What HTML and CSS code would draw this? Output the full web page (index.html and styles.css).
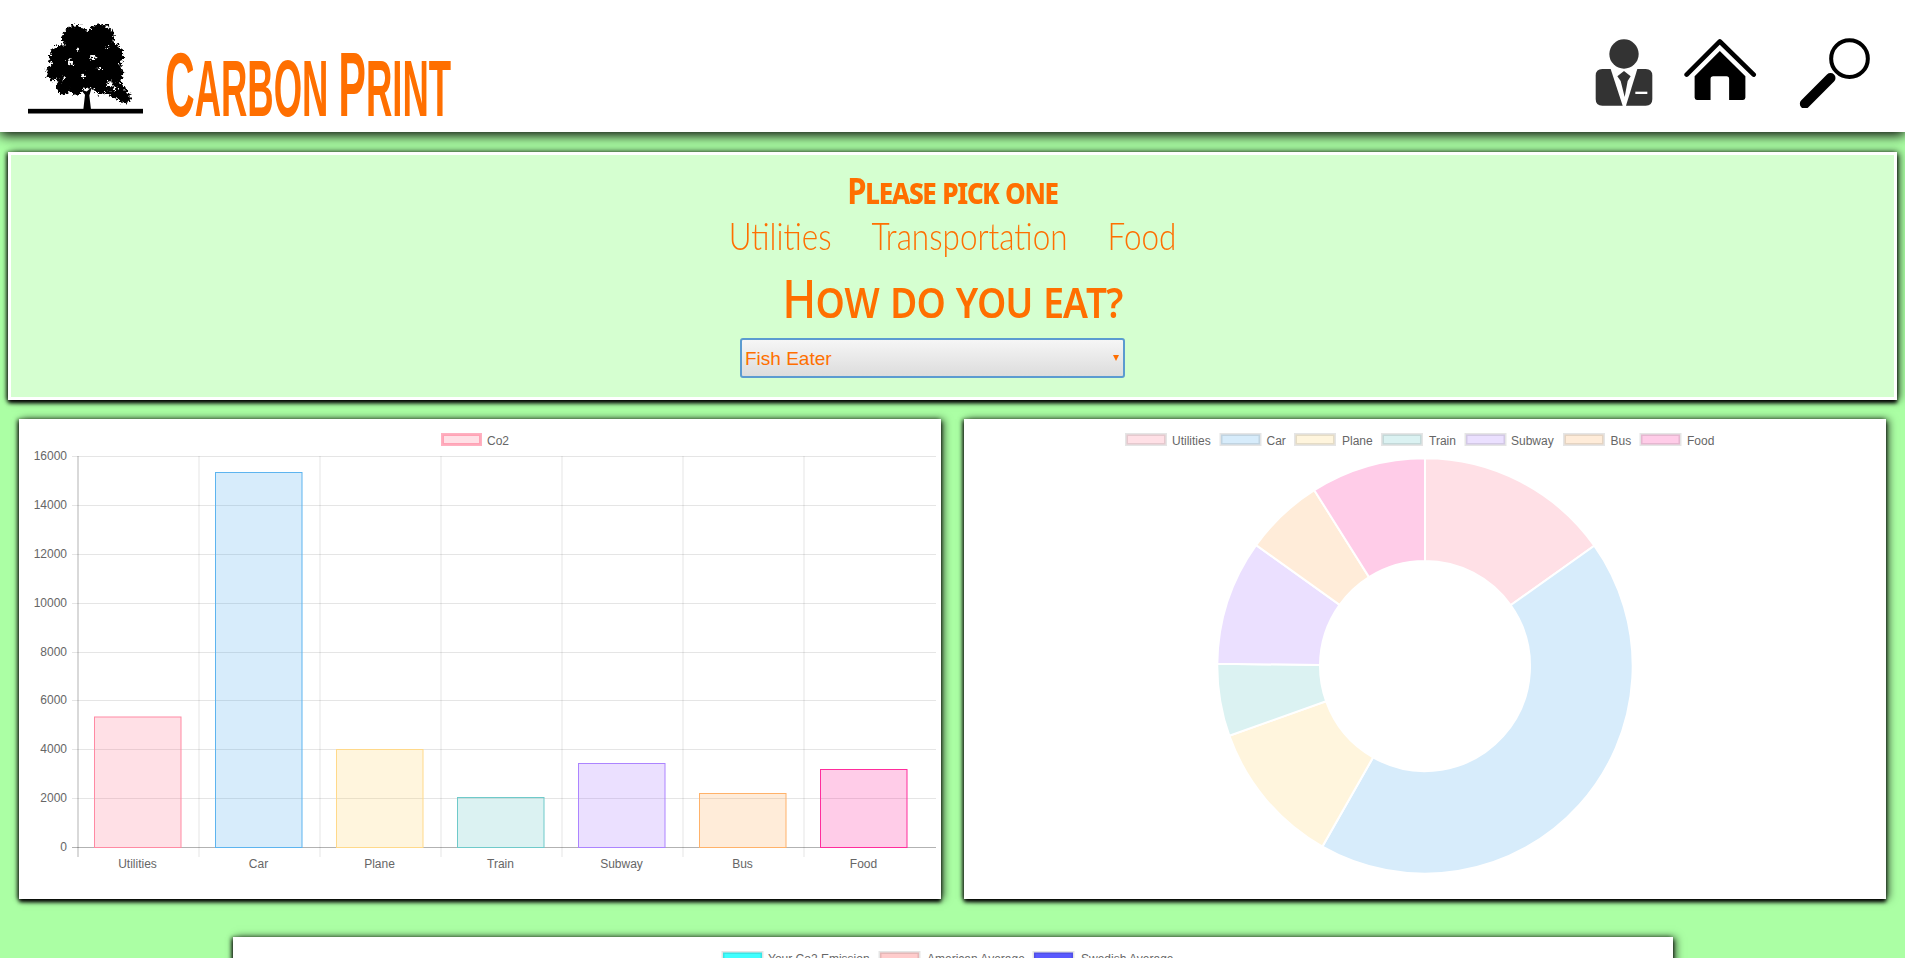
FILE: index.html
```html
<!DOCTYPE html>
<html lang="en">
<head>
  <meta charset="UTF-8" />
  <title>Carbon Print</title>
  <link rel="stylesheet" href="styles.css">
</head>
<body>
  <header class="topbar">
    <div class="brand">
      <svg class="tree" viewBox="24 20 345 275">
        <defs>
          <filter id="rough" x="-10%" y="-10%" width="120%" height="120%">
            <feTurbulence type="fractalNoise" baseFrequency="0.13" numOctaves="3" seed="4" />
            <feDisplacementMap in="SourceGraphic" scale="26" xChannelSelector="R" yChannelSelector="G" />
          </filter>
        </defs>
        <g filter="url(#rough)">
          <circle cx="165" cy="68" r="38" /><circle cx="240" cy="68" r="42" />
          <circle cx="125" cy="125" r="36" /><circle cx="200" cy="110" r="60" />
          <circle cx="272" cy="120" r="38" /><circle cx="105" cy="172" r="26" />
          <circle cx="150" cy="170" r="45" /><circle cx="210" cy="170" r="50" />
          <circle cx="275" cy="175" r="35" /><circle cx="130" cy="215" r="22" />
          <circle cx="290" cy="225" r="27" /><circle cx="314" cy="245" r="18" />
          <circle cx="245" cy="205" r="30" /><circle cx="170" cy="218" r="20" />
          <g class="tree-holes">
            <circle cx="150" cy="140" r="9" /><circle cx="190" cy="180" r="6" />
            <circle cx="220" cy="125" r="7" /><circle cx="270" cy="205" r="8" />
            <circle cx="285" cy="218" r="6" /><circle cx="105" cy="195" r="5" />
            <circle cx="130" cy="190" r="5" /><circle cx="240" cy="160" r="4" />
            <circle cx="175" cy="100" r="4" /><circle cx="262" cy="95" r="3" />
          </g>
        </g>
        <path d="M190 282 L195 238 L182 222 L200 228 L216 214 L208 240 L213 282 Z" />
        <rect x="24" y="280" width="345" height="14" />
      </svg>
      <h1 class="title"><span class="initial">C</span>arbon <span class="initial">P</span>rint</h1>
    </div>
    <nav class="icons">
      <svg class="icon icon-person" viewBox="100 85 180 210">
        <circle cx="190" cy="133" r="44" />
        <path d="M125 178 H150 L186 288 H125 Q105 288 105 268 V198 Q105 178 125 178 Z" />
        <path d="M255 178 H230 L196 288 H255 Q275 288 275 268 V198 Q275 178 255 178 Z" />
        <path d="M190 184 L210 200 L201 214 L192 262 L180 214 L170 200 Z" />
        <rect class="pocket" x="224" y="246" width="36" height="7" />
      </svg>
      <svg class="icon icon-home" viewBox="370 85 220 210">
        <path class="roof" d="M378 195 L478 95 L580 195" />
        <path d="M478 124 L555 200 V264 Q555 271 548 271 H506 V208 Q506 200 498 200 H458 Q450 200 450 208 V271 H409 Q402 271 402 264 V200 Z" />
      </svg>
      <svg class="icon icon-search" viewBox="715 85 215 210">
        <circle class="lens" cx="869" cy="147" r="55" />
        <path class="handle" d="M735 282 L812 205" />
      </svg>
    </nav>
  </header>

  <main class="content">
    <section class="panel">
      <h2 class="pick">Please pick one</h2>
      <div class="categories">
        <a>Utilities</a>
        <a>Transportation</a>
        <a>Food</a>
      </div>
      <h3 class="question">How do you eat?</h3>
      <div class="select-wrap">
        <select class="diet">
          <option>Fish Eater</option>
          <option>Meat Eater</option>
          <option>Vegetarian</option>
          <option>Vegan</option>
        </select>
      </div>
    </section>

    <div class="charts">
      <div class="card">
        <svg class="chart" viewBox="0 0 922 480">
          <rect class="swatch-red" x="423.5" y="15.5" width="38" height="10" />
          <text class="label" x="468" y="26">Co2</text>

          <path class="grid" d="M53 37.5H917M53 86.5H917M53 135.5H917M53 184.5H917M53 233.5H917M53 281.5H917M53 330.5H917M53 379.5H917" />
          <path class="grid" d="M180 37V438M301 37V438M422 37V438M543 37V438M664 37V438M785 37V438" />
          <path class="axis" d="M59 37V438M53 428.5H917" />

          <text class="tick" x="48" y="41">16000</text>
          <text class="tick" x="48" y="90">14000</text>
          <text class="tick" x="48" y="139">12000</text>
          <text class="tick" x="48" y="188">10000</text>
          <text class="tick" x="48" y="237">8000</text>
          <text class="tick" x="48" y="285">6000</text>
          <text class="tick" x="48" y="334">4000</text>
          <text class="tick" x="48" y="383">2000</text>
          <text class="tick" x="48" y="432">0</text>

          <rect class="bar-red" x="75.5" y="298" width="86.5" height="130.5" />
          <rect class="bar-blue" x="196.5" y="53.5" width="86.5" height="375" />
          <rect class="bar-yellow" x="317.5" y="330.5" width="86.5" height="98" />
          <rect class="bar-teal" x="438.5" y="378.5" width="86.5" height="50" />
          <rect class="bar-purple" x="559.5" y="344.5" width="86.5" height="84" />
          <rect class="bar-orange" x="680.5" y="374.5" width="86.5" height="54" />
          <rect class="bar-pink" x="801.5" y="350.5" width="86.5" height="78" />

          <text class="label mid" x="118.5" y="449">Utilities</text>
          <text class="label mid" x="239.5" y="449">Car</text>
          <text class="label mid" x="360.5" y="449">Plane</text>
          <text class="label mid" x="481.5" y="449">Train</text>
          <text class="label mid" x="602.5" y="449">Subway</text>
          <text class="label mid" x="723.5" y="449">Bus</text>
          <text class="label mid" x="844.5" y="449">Food</text>
        </svg>
      </div>

      <div class="card">
        <svg class="chart" viewBox="0 0 922 480">
          <rect class="key key-red" x="162.5" y="15.5" width="39" height="10" />
          <text class="label" x="208" y="26">Utilities</text>
          <rect class="key key-blue" x="257" y="15.5" width="39" height="10" />
          <text class="label" x="302.5" y="26">Car</text>
          <rect class="key key-yellow" x="331.5" y="15.5" width="39" height="10" />
          <text class="label" x="378" y="26">Plane</text>
          <rect class="key key-teal" x="418.5" y="15.5" width="39" height="10" />
          <text class="label" x="465" y="26">Train</text>
          <rect class="key key-purple" x="502" y="15.5" width="39" height="10" />
          <text class="label" x="547" y="26">Subway</text>
          <rect class="key key-orange" x="600.5" y="15.5" width="39" height="10" />
          <text class="label" x="646.5" y="26">Bus</text>
          <rect class="key key-pink" x="677" y="15.5" width="39" height="10" />
          <text class="label" x="723" y="26">Food</text>

          <g transform="translate(0 1)">
            <path class="slice fill-red" d="M461 38.3A207.7 207.7 0 0 1 630.3 125.7L546.6 185.2A105 105 0 0 0 461 141Z" />
            <path class="slice fill-blue" d="M630.3 125.7A207.7 207.7 0 0 1 358.4 426.6L409.1 337.3A105 105 0 0 0 546.6 185.2Z" />
            <path class="slice fill-yellow" d="M358.4 426.6A207.7 207.7 0 0 1 265.3 315.7L362.1 281.2A105 105 0 0 0 409.1 337.3Z" />
            <path class="slice fill-teal" d="M265.3 315.7A207.7 207.7 0 0 1 253.3 243.8L356 244.9A105 105 0 0 0 362.1 281.2Z" />
            <path class="slice fill-purple" d="M253.3 243.8A207.7 207.7 0 0 1 292.1 125.1L375.6 184.9A105 105 0 0 0 356 244.9Z" />
            <path class="slice fill-orange" d="M292.1 125.1A207.7 207.7 0 0 1 350.3 70.2L405 157.1A105 105 0 0 0 375.6 184.9Z" />
            <path class="slice fill-pink" d="M350.3 70.2A207.7 207.7 0 0 1 461 38.3L461 141A105 105 0 0 0 405 157.1Z" />
          </g>
        </svg>
      </div>
    </div>

    <div class="card card-wide">
      <svg class="chart" viewBox="0 0 1440 480">
        <rect class="key key-cyan" x="490" y="15.5" width="39" height="10" />
        <text class="label" x="535" y="26">Your Co2 Emission</text>
        <rect class="key key-rose" x="647" y="15.5" width="39" height="10" />
        <text class="label" x="694" y="26">American Average</text>
        <rect class="key key-indigo" x="801" y="15.5" width="39" height="10" />
        <text class="label" x="848" y="26">Swedish Average</text>
      </svg>
    </div>
  </main>
</body>
</html>
```

FILE: styles.css
```css
html, body {
  margin: 0;
  height: 958px;
  overflow: hidden;
}
body {
  background: #abffa4;
  font-family: "Liberation Sans", Arial, sans-serif;
  color: #ff6f00;
}

/* top bar */
.topbar {
  position: relative;
  z-index: 2;
  height: 132px;
  box-sizing: border-box;
  display: flex;
  justify-content: space-between;
  background: #fff;
  box-shadow: 0 3px 12px #000;
  padding: 0 35px 0 28px;
}
.brand { display: flex; align-items: flex-start; gap: 22px; padding-top: 22px; }
.tree { width: 115px; height: 92px; flex: none; }
.tree-holes { fill: #fff; }
.title {
  margin: 21px 0 0;
  width: 290px;
  white-space: nowrap;
  text-transform: uppercase;
  font: bold 80px/84px "Liberation Sans Narrow", "Liberation Sans", sans-serif;
  transform: scaleX(0.456);
  transform-origin: left center;
}
.initial { font-size: 90px; }
.icons { display: flex; gap: 30px; padding-top: 38px; height: 70px; }
.icon { height: 70px; flex: none; }
.icon-person { width: 60px; fill: #333; }
.icon-person .pocket { fill: #fff; }
.icon-home { width: 73px; }
.icon-search { width: 72px; margin-left: 11px; }
.roof { fill: none; stroke: #000; stroke-width: 14; stroke-linecap: round; stroke-linejoin: round; }
.lens { fill: none; stroke: #000; stroke-width: 12; }
.handle { stroke: #000; stroke-width: 30; stroke-linecap: round; }

/* main */
.content { padding: 20px 8px 0; }
.panel, .card {
  box-shadow: 0 3px 4px #000, 3px 0 8px rgba(0, 0, 0, 0.6), -2px 0 4px rgba(0, 0, 0, 0.5);
}
.panel {
  height: 248px;
  box-sizing: border-box;
  background: #d5ffd0;
  border: 3px solid #fff;
  text-align: center;
  padding-top: 13px;
}
.pick {
  margin: 0;
  font: bold 36px/46px "Noto Sans", sans-serif;
  font-variant: small-caps;
  letter-spacing: -1.5px;
  transform: scaleX(0.86);
}
.categories {
  display: flex;
  justify-content: center;
  gap: 47px;
  font: 300 37px/44px Lato, Roboto, sans-serif;
  height: 54px;
  transform: scaleX(0.85);
}
.question {
  margin: 0 0 10px;
  font: 500 53px/60px "Noto Sans", sans-serif;
  font-variant: small-caps;
  letter-spacing: -1px;
  transform: scaleX(0.86);
}
.select-wrap {
  position: relative;
  width: 385px;
  height: 40px;
  margin: 0 auto;
  transform: translateX(-20px);
}
.select-wrap::after {
  content: "";
  position: absolute;
  right: 6px;
  top: 17px;
  border: 3.5px solid transparent;
  border-top: 6px solid #ff6f00;
}
.diet {
  appearance: none;
  width: 100%;
  height: 100%;
  box-sizing: border-box;
  padding: 0 3px;
  border: 2px solid #5b9bd0;
  border-radius: 3px;
  background: linear-gradient(#f6f6f6, #dcdcdc);
  color: #ff6f00;
  font: 19px "Liberation Sans", Arial, sans-serif;
}

.charts {
  display: grid;
  grid-template-columns: 922px 922px;
  gap: 23px;
  padding: 0 11px;
  margin-top: 19px;
}
.card {
  height: 480px;
  background: #fff;
}
.card-wide { width: 1440px; margin: 38px auto 0; }
.chart { display: block; width: 100%; height: 100%; }

/* chart parts */
.label, .tick { font: 12px "Liberation Sans", Arial, sans-serif; fill: #666; }
.tick { text-anchor: end; }
.mid { text-anchor: middle; }
.grid { fill: none; stroke: rgba(0, 0, 0, 0.1); }
.axis { fill: none; stroke: rgba(0, 0, 0, 0.3); }

.swatch-red { fill: rgba(255, 99, 132, 0.2); stroke: rgba(255, 99, 132, 0.5); stroke-width: 3; }
.bar-red { fill: rgba(255, 99, 132, 0.2); stroke: #ff8aa3; }
.bar-blue { fill: rgba(54, 162, 235, 0.2); stroke: #5db4ef; }
.bar-yellow { fill: rgba(255, 206, 86, 0.2); stroke: #ffd98a; }
.bar-teal { fill: rgba(75, 192, 192, 0.2); stroke: #6fcaca; }
.bar-purple { fill: rgba(153, 102, 255, 0.2); stroke: #ac84ff; }
.bar-orange { fill: rgba(255, 159, 64, 0.2); stroke: #ffb26a; }
.bar-pink { fill: rgba(255, 0, 140, 0.2); stroke: #ff2d9c; }

.slice { stroke: #fff; stroke-width: 2; }
.fill-red { fill: #ffe0e6; }
.fill-blue { fill: #d7ecfb; }
.fill-yellow { fill: #fff5dd; }
.fill-teal { fill: #dbf2f2; }
.fill-purple { fill: #ebe0ff; }
.fill-orange { fill: #ffecd9; }
.fill-pink { fill: #ffcce8; }

.key { stroke: rgba(0, 0, 0, 0.1); stroke-width: 3; }
.key-red { fill: #ffe0e6; }
.key-blue { fill: #d7ecfb; }
.key-yellow { fill: #fff5dd; }
.key-teal { fill: #dbf2f2; }
.key-purple { fill: #ebe0ff; }
.key-orange { fill: #ffecd9; }
.key-pink { fill: #ffcce8; }
.key-cyan { fill: #40ffff; }
.key-rose { fill: #ffcccc; }
.key-indigo { fill: #5a5aff; }
```
